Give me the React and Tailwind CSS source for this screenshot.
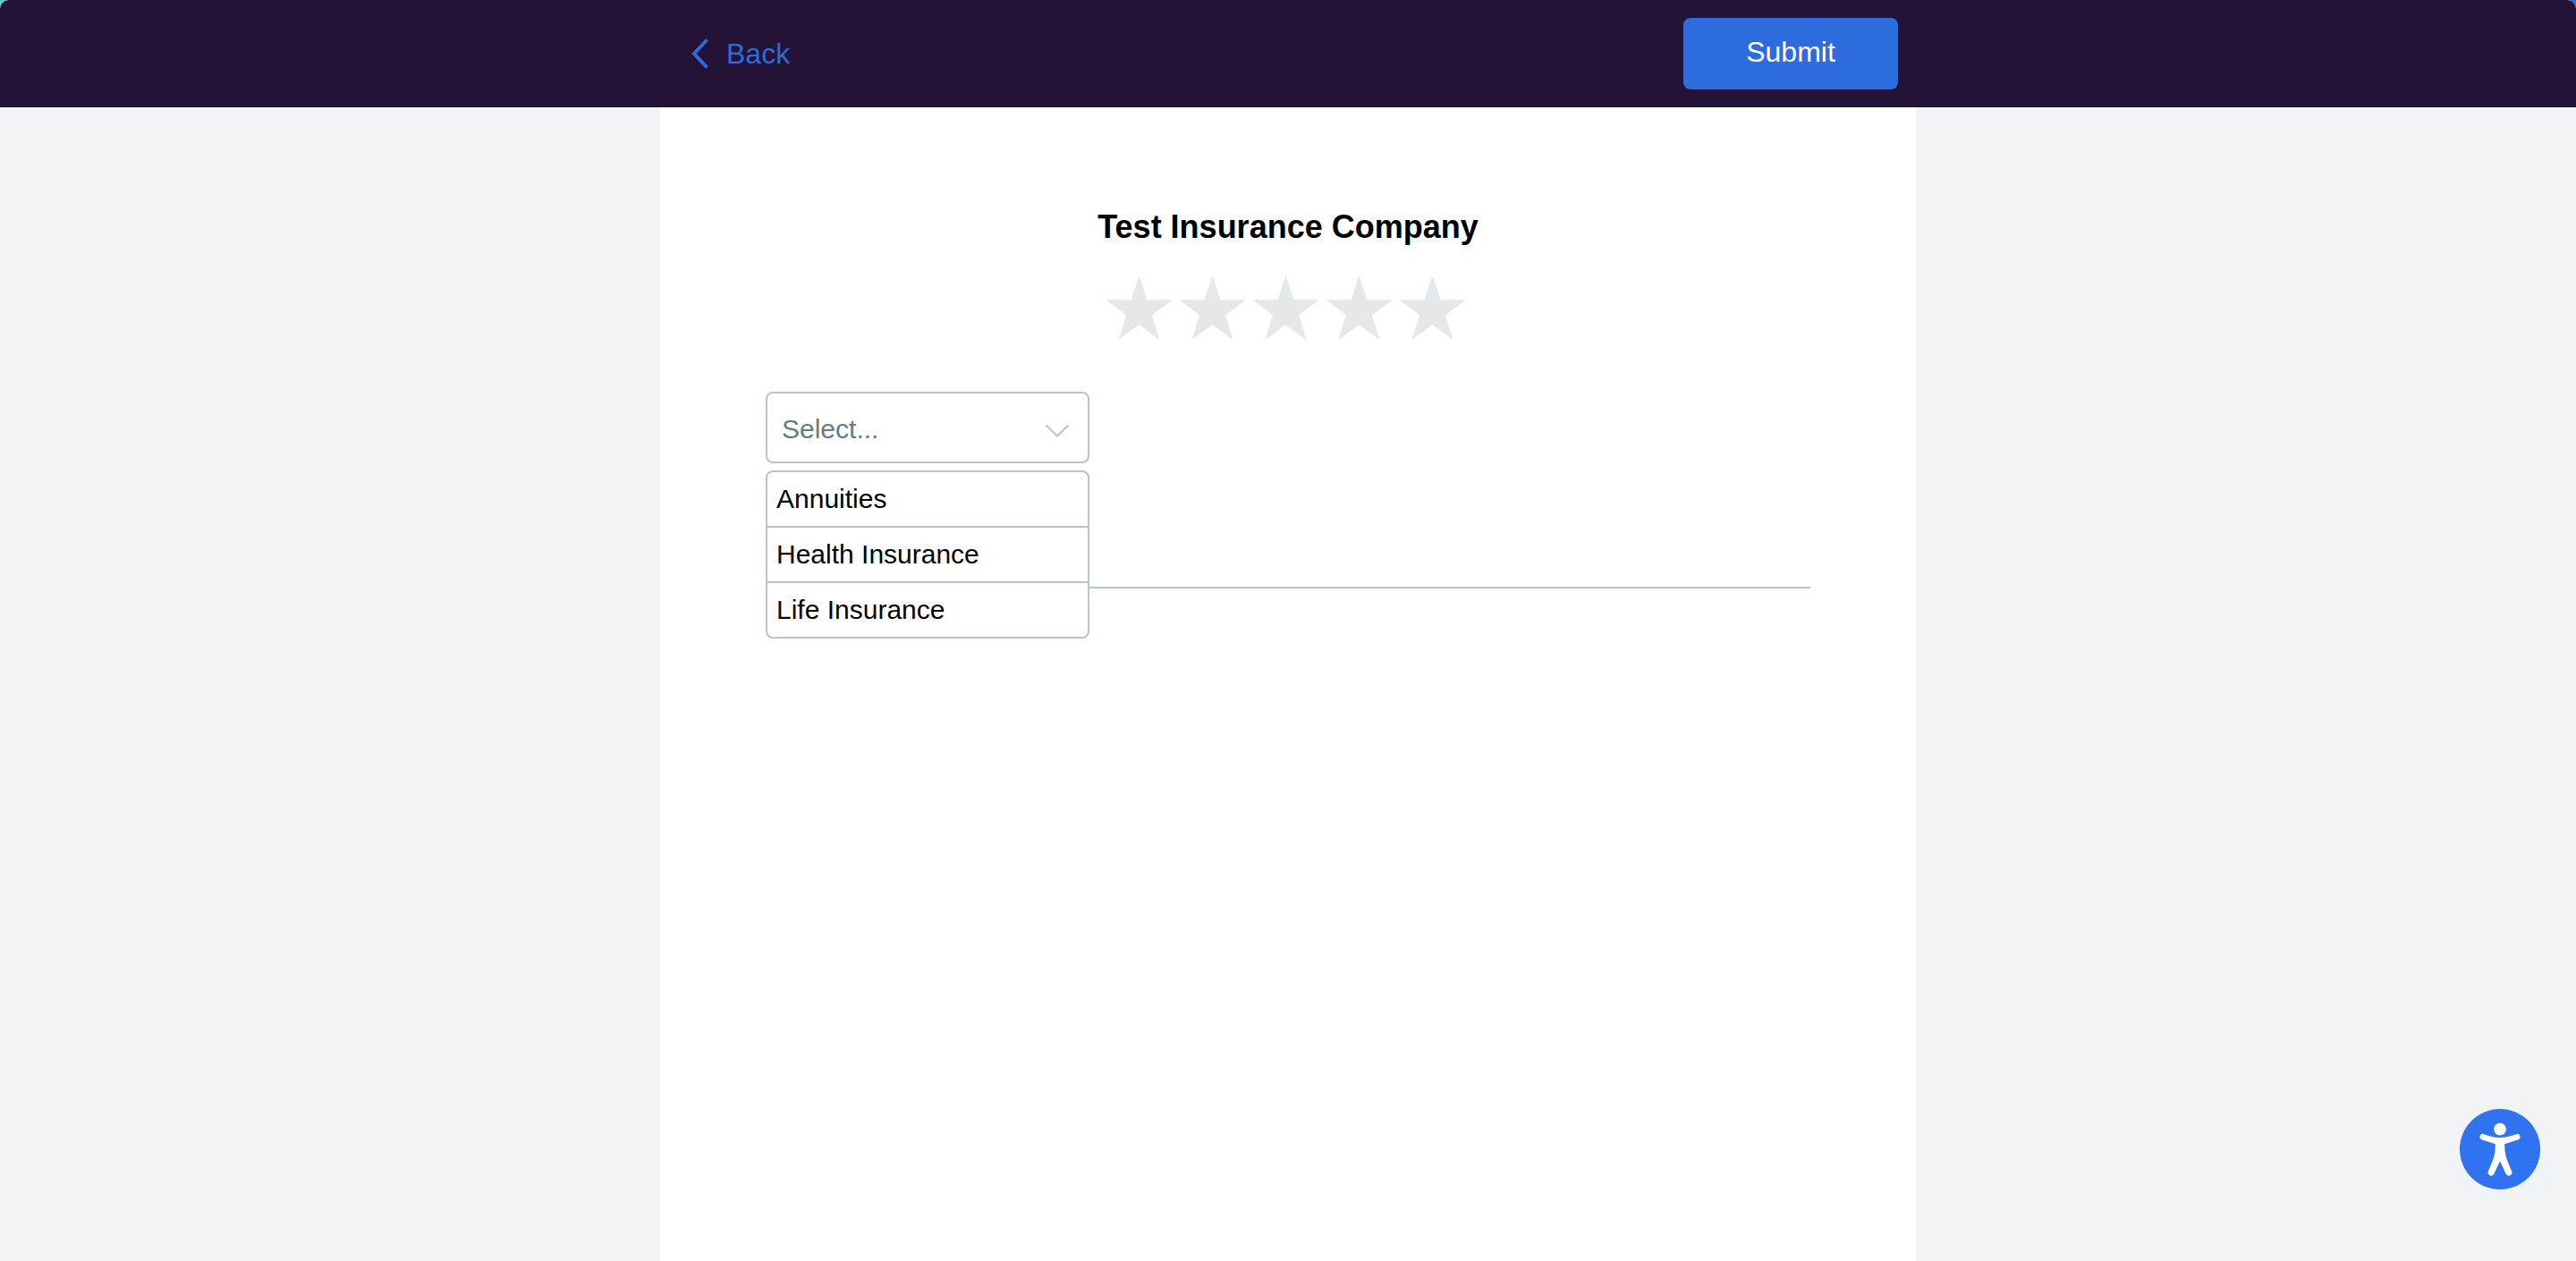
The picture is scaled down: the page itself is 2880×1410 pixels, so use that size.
import React, { useState } from "react";

const OPTIONS = ["Annuities", "Health Insurance", "Life Insurance"];

function Header() {
  return (
    <header className="bg-[#231437]">
      <div className="mx-auto flex h-[120px] max-w-[1404px] items-center justify-between px-5">
        <a href="#back" className="flex items-center gap-5 pl-[14px] text-[32px] leading-10 text-[#2d6cdf]">
          <svg width="20" height="36" viewBox="0 0 20 36" fill="none" aria-hidden="true">
            <path d="M18.500 2.500 4 18 18.500 33.500" stroke="currentColor" strokeWidth="4" />
          </svg>
          Back
        </a>
        <button type="submit" form="review" className="h-20 w-60 rounded-lg bg-[#2d6cdf] pb-1 text-[32px] leading-10 text-white">
          Submit
        </button>
      </div>
    </header>
  );
}

function Stars() {
  const [rating, setRating] = useState(0);
  return (
    <div role="radiogroup" aria-label="Rating" className="mt-8 flex justify-center">
      {[1, 2, 3, 4, 5].map((n) => (
        <label key={n} className="w-[82px] cursor-pointer">
          <input
            type="radio"
            name="rating"
            value={n}
            aria-label={`${n} stars`}
            checked={rating === n}
            onChange={() => setRating(n)}
            className="sr-only"
          />
          <svg
            width="76"
            height="76"
            viewBox="0 0 76 76"
            aria-hidden="true"
            className={n <= rating ? "text-[#2d6cdf]" : "text-[#e4e8eb]"}
          >
            <path
              d="M38.500 2 47.500 29.300H76L53 46.300 61.500 74 38.500 57 15.500 74 24 46.300 1.500 29.300H29.500Z"
              fill="currentColor"
            />
          </svg>
        </label>
      ))}
    </div>
  );
}

function TypePicker() {
  const [value, setValue] = useState("");
  return (
    <div className="relative w-[362px]">
      <select
        aria-label="Insurance type"
        value={value}
        onChange={(e) => setValue(e.target.value)}
        className="block h-20 w-full appearance-none rounded-lg border-2 border-[#b9c4c9] bg-white pt-1 pl-4 text-[30px] leading-9 text-[#677a84]"
      >
        <option value="">Select...</option>
        {OPTIONS.map((o) => (
          <option key={o}>{o}</option>
        ))}
      </select>
      <svg
        width="28"
        height="16"
        viewBox="0 0 28 16"
        fill="none"
        aria-hidden="true"
        className="pointer-events-none absolute top-9 right-[22px]"
      >
        <path d="M1.500 1.500 14 13.500 26.500 1.500" stroke="#b9c4c9" strokeWidth="2" />
      </svg>
      <ul className="absolute top-full left-0 mt-2 w-full divide-y-2 divide-[#b9c4c9] overflow-hidden rounded-lg border-2 border-[#b9c4c9] bg-white">
        {OPTIONS.map((o) => (
          <li key={o}>
            <button
              type="button"
              onClick={() => setValue(o)}
              className="block h-[60px] w-full px-[10px] text-left text-[30px] leading-9 text-black"
            >
              {o}
            </button>
          </li>
        ))}
      </ul>
    </div>
  );
}

function AccessibilityButton() {
  return (
    <button
      type="button"
      aria-label="Accessibility options"
      className="fixed right-10 bottom-20 size-[90px] rounded-full bg-[#2f73f0] text-white"
    >
      <svg viewBox="0 0 90 90" className="size-full" aria-hidden="true">
        <circle cx="45" cy="22.700" r="6.900" fill="currentColor" />
        <path
          d="M26.400 27.900Q35 31.500 45 32Q55 31.500 63.600 27.900A3.400 3.400 0 0 1 65.600 34.300L50.200 39.300Q50 47 51.500 52.500Q53 58 58 69.300A3.600 3.600 0 0 1 51.600 72.600L45 58.300 38.400 72.600A3.600 3.600 0 0 1 32 69.300Q37 58 38.500 52.500Q40 47 39.800 39.300L24.400 34.300A3.400 3.400 0 0 1 26.400 27.900Z"
          fill="currentColor"
        />
      </svg>
    </button>
  );
}

export default function App() {
  return (
    <div className="bg-linear-to-r from-[#5cc9bd] from-50% to-[#2d6cdf] to-50% font-['Liberation_Sans',Arial,sans-serif]">
      <div className="flex min-h-screen flex-col overflow-hidden rounded-t-[10px] bg-[#f0f4f7]">
        <Header />
        <main className="mx-auto w-full max-w-[1404px] grow bg-white px-[118px] pt-[114px]">
          <h1 className="text-center text-[36px] leading-10 font-bold text-black">Test Insurance Company</h1>
          <form id="review" onSubmit={(e) => e.preventDefault()}>
            <Stars />
            <div className="mt-14">
              <TypePicker />
            </div>
            <hr className="mt-[138px] border-t-2 border-[#b9c4c9]" />
          </form>
        </main>
      </div>
      <AccessibilityButton />
    </div>
  );
}
